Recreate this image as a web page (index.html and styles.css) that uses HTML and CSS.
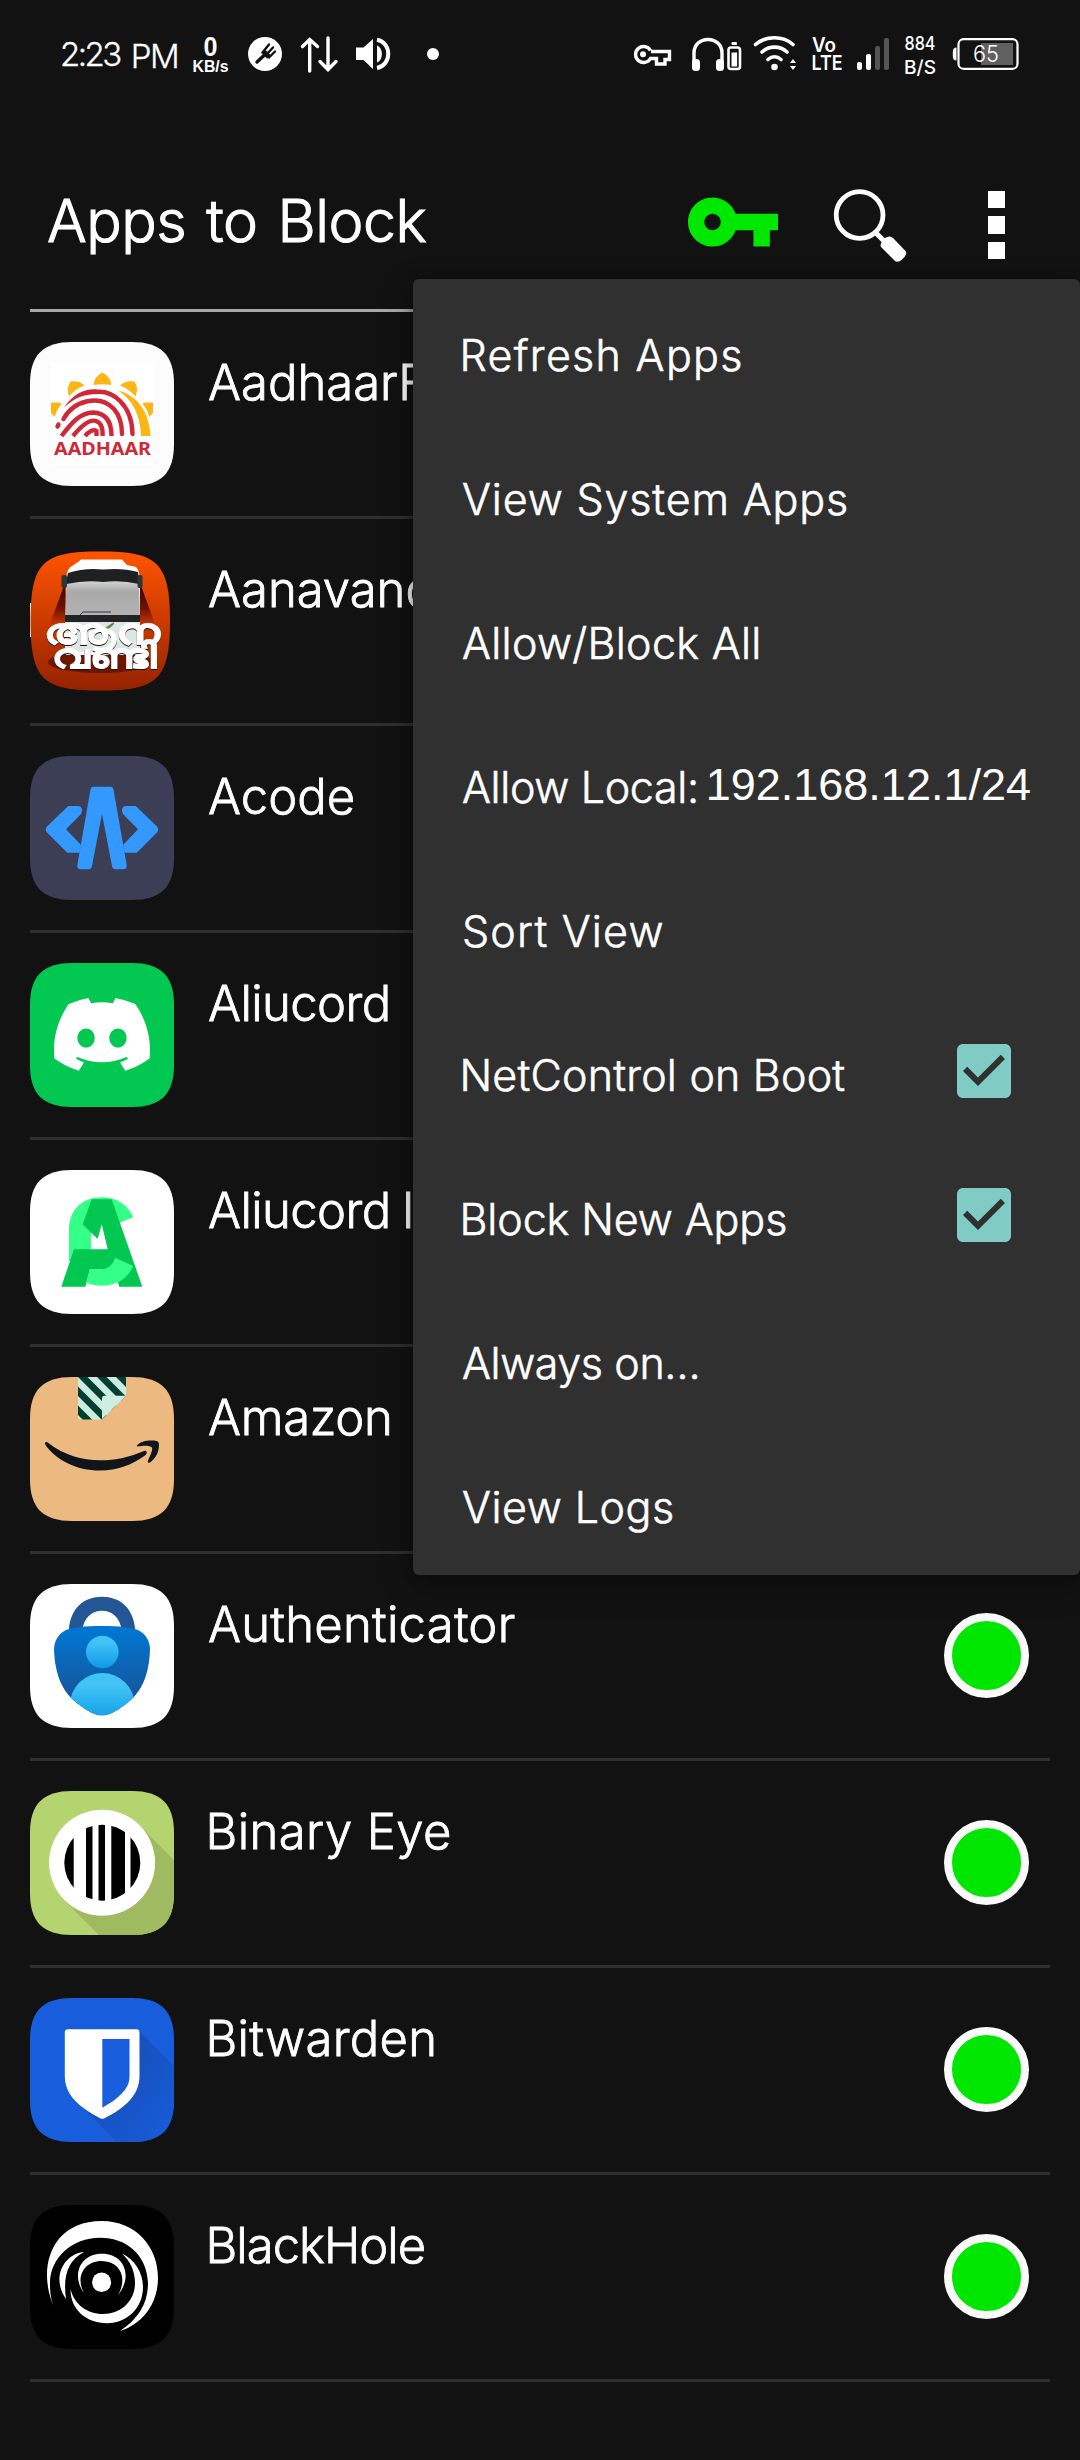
FILE: index.html
```
<!DOCTYPE html>
<html lang="en">
<head>
<meta charset="utf-8">
<title>Apps to Block</title>
<link rel="stylesheet" href="styles.css">
</head>
<body>
<svg class="defs" aria-hidden="true">
  <defs>
    <clipPath id="squircle"><path d="M0 42C0 13 13 0 42 0H102C131 0 144 13 144 42V102C144 131 131 144 102 144H42C13 144 0 131 0 102Z"/></clipPath>
    <linearGradient id="busBg" x1="0" y1="0" x2="0" y2="1"><stop offset="0" stop-color="#ff5400"/><stop offset="1" stop-color="#942200"/></linearGradient>
    <linearGradient id="beam" x1="0" y1="0" x2="0" y2="1"><stop offset="0" stop-color="#2a0500"/><stop offset=".6" stop-color="#6d1200"/><stop offset="1" stop-color="#c43500"/></linearGradient>
    <linearGradient id="glass" x1="0" y1="0" x2="0" y2="1"><stop offset="0" stop-color="#d2d2d2"/><stop offset=".3" stop-color="#a9a9a9"/><stop offset="1" stop-color="#b4b4b4"/></linearGradient>
    <linearGradient id="shield" x1="0" y1="0" x2="0" y2="1"><stop offset="0" stop-color="#0078d4"/><stop offset=".75" stop-color="#1457a0"/></linearGradient>
    <linearGradient id="head" x1="0" y1="0" x2="0" y2="1"><stop offset=".2" stop-color="#41c3f6"/><stop offset="1" stop-color="#0f98e8"/></linearGradient>
    <linearGradient id="torso" x1="0" y1="0" x2="0" y2="1"><stop offset=".2" stop-color="#41c3f6"/><stop offset=".65" stop-color="#16a3e9"/></linearGradient>
    <linearGradient id="bwShade" x1="0" y1="0" x2="1" y2="1"><stop offset=".3" stop-color="#174fb8"/><stop offset="1" stop-color="#175ddc"/></linearGradient>
    <pattern id="tape" width="19" height="19" patternUnits="userSpaceOnUse" patternTransform="translate(48 0)">
      <rect width="19" height="19" fill="#cbecdf"/>
      <path d="M0 0H9.500L19 9.500V19ZM0 9.500V19H9.500Z" fill="#003f32"/>
    </pattern>
    <clipPath id="eye"><circle cx="72.300" cy="71.700" r="38"/></clipPath>
    <clipPath id="guard"><path id="guardShape" d="M72 42C90 42 100 43.500 108 46C116 50 120 57 120 66C119 92 111 109 96 120C85 128 79 131.300 72 131.300C65 131.300 59 128 48 120C33 109 25 92 24 66C24 57 28 50 36 46C44 43.500 54 42 72 42Z"/></clipPath>
  </defs>
</svg>

<header class="status">
  <div class="status-left">
    <span class="clock">2:23<span class="meridiem">PM</span></span>
    <svg class="s-rate" viewBox="192 34 38 40"><text class="rate-num" x="203.500" y="56" textLength="14" lengthAdjust="spacingAndGlyphs">0</text><text class="rate-unit" x="192.500" y="71.500" textLength="36" lengthAdjust="spacingAndGlyphs">KB/s</text></svg>
    <svg class="s-fork" viewBox="248 34 34 40"><ellipse cx="265" cy="54" rx="17" ry="17" fill="#fff"/><g fill="none" stroke="#121212" stroke-width="2.400" stroke-linecap="round"><path d="M257 62L265 54.500" stroke-width="3.400"/><path d="M262.500 52.500L269 44.500M267 54L273 47.500M269 57.500L275 51.500"/><path d="M263.500 51.500L269 57" stroke-width="5" stroke-linecap="butt"/></g></svg>
    <svg class="s-arrows" viewBox="301 34 37 40"><path d="M309.700 71V40M302.500 46.500L309.700 39.500L317.500 46.500M328 38V69M320 61.500L328 69.500L336 61.500" fill="none" stroke="#fff" stroke-width="3.400" stroke-linecap="round"/></svg>
    <svg class="s-sound" viewBox="356 34 34 40"><path d="M356 47.500H363.500L373 39V69L363.500 60H356Z" fill="#fff"/><path d="M377 45.500C383.500 48 383.500 60 377 62.500Z" fill="#fff"/><path d="M377 39.700C392 42.500 392 65 377 68" fill="none" stroke="#fff" stroke-width="4"/></svg>
    <svg class="s-dot" viewBox="427 34 13 40"><circle cx="433" cy="54" r="6" fill="#fff"/></svg>
  </div>
  <div class="status-right">
    <svg class="r-key" viewBox="632 34 40 40"><path d="M650.500 50.500A8 8 0 1 0 650.500 58.500H656.500V64H665V59.500H669.500V51.500H651" fill="none" stroke="#fff" stroke-width="3.400"/><circle cx="643" cy="54.300" r="3" fill="#fff"/></svg>
    <svg class="r-phones" viewBox="691 34 51 40"><path d="M694 66V53C694 35 722 35 722 53V66" fill="none" stroke="#fff" stroke-width="3.400"/><rect x="692" y="59" width="8" height="12" rx="3.500" fill="#fff"/><rect x="716" y="59" width="8" height="12" rx="3.500" fill="#fff"/><rect x="728.500" y="47.500" width="11.500" height="21.500" rx="2.500" fill="none" stroke="#fff" stroke-width="2.600"/><rect x="731.500" y="52.500" width="5.600" height="14" fill="#fff"/><rect x="731.500" y="42" width="5.500" height="3" rx="1" fill="#fff"/></svg>
    <svg class="r-wifi" viewBox="753 34 44 40"><g fill="none" stroke="#fff" stroke-width="3.600" stroke-linecap="round"><path d="M755.500 44.500C766 35.500 783 35.500 793 44.500M762 52C769 45.500 780 45.500 787 52M768 59.500C772 56 777 56 781 59.500"/></g><circle cx="774.500" cy="67" r="3.300" fill="#fff"/><path d="M790 63L793 59L796 63ZM790 66L793 70L796 66Z" fill="#fff"/></svg>
    <svg class="r-volte" viewBox="811 34 32 40"><text class="volte" x="812" y="52" textLength="24" lengthAdjust="spacingAndGlyphs">Vo</text><text class="volte" x="811.500" y="70" textLength="31" lengthAdjust="spacingAndGlyphs">LTE</text></svg>
    <svg class="r-signal" viewBox="856 34 34 40"><rect x="857" y="62" width="5" height="8" rx="2" fill="#fff"/><rect x="866" y="54" width="5" height="16" rx="2" fill="#fff"/><rect x="875" y="46" width="5" height="24" rx="2" fill="#555"/><rect x="884" y="38" width="5" height="32" rx="2" fill="#555"/></svg>
    <svg class="r-speed" viewBox="904 34 33 42"><text class="speed" x="904.500" y="50" textLength="31" lengthAdjust="spacingAndGlyphs">884</text><text class="speed" x="904" y="74" textLength="32" lengthAdjust="spacingAndGlyphs">B/S</text></svg>
    <svg class="r-battery" viewBox="952 34 67 40"><rect x="958.500" y="39.200" width="59" height="29.600" rx="5" fill="none" stroke="#fff" stroke-width="2.200"/><path d="M956.500 47.500V60.500Q952.800 60.500 952.800 56V52Q952.800 47.500 956.500 47.500Z" fill="#fff"/><rect x="981" y="43" width="32" height="22" fill="#606060"/><text class="charge" x="973" y="61.800" textLength="26" lengthAdjust="spacingAndGlyphs">65</text></svg>
  </div>
</header>

<div class="appbar">
  <h1 class="title">Apps to Block</h1>
  <div class="actions">
    <svg class="a-key" viewBox="1 6 22 12"><path fill="#00e800" d="M12.650 10C11.830 7.670 9.610 6 7 6c-3.310 0-6 2.690-6 6s2.690 6 6 6c2.610 0 4.830-1.670 5.650-4H17v4h4v-4h2v-4H12.650zM7 14c-1.100 0-2-.9-2-2s.9-2 2-2 2 .9 2 2-.9 2-2 2z"/></svg>
    <svg class="a-search" viewBox="833 187 75 76"><circle cx="859.600" cy="215" r="23.400" fill="none" stroke="#fff" stroke-width="4.800"/><path d="M876 233L884 241" stroke="#fff" stroke-width="5"/><path d="M883.500 238.500L889 236.500Q891 236 893 238L905.500 251Q908 254 902 259.500Q898 263 895 261L881.500 247.500Q880 246 881 243.500Z" fill="#fff"/></svg>
    <span class="a-more"><i></i><i></i><i></i></span>
  </div>
</div>

<main class="list">
  <div class="row">
    <svg class="icon" viewBox="0 0 144 144"><g clip-path="url(#squircle)"><rect width="144" height="144" fill="#fcfcfc"/><rect x="21" y="21" width="102" height="102" fill="#fff"/></g>
      <g fill="#fbb615"><path d="M72.300 30.500Q81 35 81.300 43Q72 41.500 63.500 43Q64 35 72.300 30.500Z"/><path d="M40.500 39.500Q49 38.500 54.500 43.500Q45 47 39 54.500Q36 46 40.500 39.500Z"/><path d="M21 60.500H29L31.700 61.500Q27 67 24.500 75L21 71Z"/><path d="M104.500 39.500Q96 38.500 90 43.500Q99 47 105.500 54.500Q109 46 104.500 39.500Z"/><path d="M123 60.500H115L112.500 61.500Q117 67 119.500 75L123 71Z"/><path d="M88 48.500C107 53 119.500 70 120.500 94H111C110.500 74 103 58 88 48.500Z"/></g>
      <g fill="none" stroke="#cf2836" stroke-width="4.400" stroke-linecap="round"><path d="M66 50C82 48 102 62 102.500 92"/><path d="M33.500 77C44 58 70 52 84 67C90 74 92 82 92 92"/><path d="M27.500 84.500L28.500 82.500"/></g>
      <path d="M34 65.500C44 51 56 46.500 67 47.500V52C56 52 45 55 34 65.500Z" fill="#cf2836"/>
      <g fill="none" stroke="#cf2836" stroke-width="4.400"><path d="M31.500 94C42 80 50 71 63 70.500C76 71 81.500 80 81.500 94"/><path d="M43 94C52 83 60 77 66 79C72 81 73 87 72.500 94"/><path d="M55 94Q62 86 66.500 89V94"/></g>
      <text class="aadhaar" x="24" y="113" textLength="97" lengthAdjust="spacingAndGlyphs">AADHAAR</text></svg>
    <span class="name n-aadhaar">AadhaarF</span><span class="toggle"></span>
  </div>
  <div class="row">
    <svg class="icon" viewBox="0 0 144 144"><rect x="0" y="54" width="2" height="34" fill="#fff"/><path d="M.5 72C.5 12 14 2.500 70 2.500S140 12 140 72S126 141.500 70 141.500S.5 132 .5 72Z" fill="url(#busBg)"/>
      <path d="M35 34L20 75H36ZM110 34L125 75H109Z" fill="url(#beam)"/><ellipse cx="70" cy="113" rx="52" ry="11" fill="#5a0f00" opacity=".75"/>
      <path d="M48 13L51 10.500H92L97 16L106 18Q110 21 110 35V106H36V30Q37 19 42 17Z" fill="#fdfdfd"/><path d="M38 24Q55 18.500 73 20.500Q92 18.500 108 23L110 37H35Z" fill="#1f2021"/><path d="M36.500 35Q55 31 73 33Q92 31 109 35L110 67H35Z" fill="url(#glass)"/><path d="M35 66H110V74H35Z" fill="#222426"/><path d="M50 66L53 63H81" fill="none" stroke="#333" stroke-width="1"/><path d="M35 73H110V103H35Z" fill="#dce6e3"/><path d="M62 76L68 79M76 79L84 74" stroke="#e46145" stroke-width="1.500"/><path d="M77 80L83 75" stroke="#2d9b4b" stroke-width="1.800"/>
      <rect x="31.500" y="26" width="5.500" height="13" rx="2" fill="#303335"/><rect x="107.500" y="26" width="5" height="13" rx="2" fill="#303335"/>
      <text class="malayalam m1" x="14" y="95" textLength="115" lengthAdjust="spacingAndGlyphs">ആന</text><text class="malayalam m2" x="22" y="119" textLength="104" lengthAdjust="spacingAndGlyphs">വണ്ടി</text></svg>
    <span class="name n-aana">Aanavand</span><span class="toggle"></span>
  </div>
  <div class="row">
    <svg class="icon" viewBox="0 0 144 144"><g clip-path="url(#squircle)"><rect width="144" height="144" fill="#3b3e54"/></g><path d="M63.500 30.700H80.500Q83 30.700 83.500 33.500L96.700 109Q97 113.300 93.500 113.300H85.500Q82.500 113.300 82 110L72 58L62 110Q61.500 113.300 58.500 113.300H50.500Q47 113.300 47.300 109L60.500 33.500Q61 30.700 63.500 30.700Z" fill="#3399ff"/><g fill="#3399ff"><path d="M38.300 50H48C52 50 53 54 51 58L36 73.300L51 89L49.500 96.700H37.300L17 76.500Q14.500 73.300 17 70.500Z"/><path d="M105.700 50H96C92 50 91 54 93 58L108 73.300L93 89L94.500 96.700H106.700L127 76.500Q129.500 73.300 127 70.500Z"/></g></svg>
    <span class="name n-acode">Acode</span><span class="toggle"></span>
  </div>
  <div class="row">
    <svg class="icon" viewBox="0 0 144 144"><g clip-path="url(#squircle)"><rect width="144" height="144" fill="#02c852"/></g><g transform="translate(24 35) scale(.755)"><path fill="#fff" d="M107.700,8.070A105.150,105.150,0,0,0,81.470,0a72.060,72.060,0,0,0-3.360,6.830A97.680,97.680,0,0,0,49,6.830,72.370,72.370,0,0,0,45.640,0,105.890,105.890,0,0,0,19.390,8.090C2.790,32.650-1.710,56.600.54,80.210h0A105.730,105.730,0,0,0,32.710,96.360,77.700,77.700,0,0,0,39.600,85.250a68.420,68.420,0,0,1-10.850-5.180c.91-.66,1.800-1.340,2.660-2a75.570,75.570,0,0,0,64.320,0c.87.710,1.760,1.390,2.660,2a68.680,68.680,0,0,1-10.870,5.190,77,77,0,0,0,6.890,11.100A105.250,105.250,0,0,0,126.600,80.220h0C129.240,52.840,122.090,29.110,107.700,8.070ZM42.450,65.690C36.180,65.690,31,60,31,53s5-12.740,11.430-12.740S54,46,53.890,53,48.840,65.690,42.450,65.690Zm42.240,0C78.410,65.690,73.250,60,73.250,53s5-12.740,11.440-12.740S96.230,46,96.120,53,91.080,65.690,84.690,65.690Z"/></g></svg>
    <span class="name n-aliucord">Aliucord</span><span class="toggle"></span>
  </div>
  <div class="row">
    <svg class="icon" viewBox="0 0 144 144"><g clip-path="url(#squircle)"><rect width="144" height="144" fill="#fff"/></g><path d="M39 60C39 40 52 27.300 72 27.300C87 27.300 98 35 103.300 47.300L88 53.300L61 53V91H39Z" fill="#34ff87"/><path d="M61.700 29.300H81.700L112.300 116.700H89.300L77.700 79.300L71.700 54.300L67.700 69L52.700 54.300Z" fill="#02c852"/><path d="M44 79.300H80L90 99L60 99.300L55.300 116.700H31.300Z" fill="#02c852"/><path d="M85 87.700L103.300 96C98 108 87 115.700 72 115.700C66 115.700 60 114.500 56 112.500L60 99.300H71C78 99 83 95 85 87.700Z" fill="#34ff87"/></svg>
    <span class="name n-aliucord">Aliucord I</span><span class="toggle"></span>
  </div>
  <div class="row">
    <svg class="icon" viewBox="0 0 144 144"><g clip-path="url(#squircle)"><rect width="144" height="144" fill="#ecb981"/></g><path d="M48 0H96V18.700L72 42.500H50Q48 42.500 48 40.500Z" fill="url(#tape)"/><path d="M72 42V21Q72 18.700 74.500 18.700H96Z" fill="#cdeee0"/><path d="M15 66.500C15 64.500 17 64.500 19 66.500C34 78 52 83.300 70 83.300C86 83.300 100 80 114 74C117 73 118 76 115 78.500C102 88 87 93.500 70 93.500C46 93.500 27 83 16 69Z" fill="#0f151b"/><path d="M107 68.500C110 64 118 63 124 63.500C128 64 129 65 129 68C129 75 126 81 120 85.500C118 86.500 117.500 85 118 83.500C120 79 123 73 122 70.500C120 68 113 68.500 109 69.300C107 69.600 106.500 69.300 107 68.500Z" fill="#0f151b"/></svg>
    <span class="name n-amazon">Amazon</span><span class="toggle"></span>
  </div>
  <div class="row">
    <svg class="icon" viewBox="0 0 144 144"><g clip-path="url(#squircle)"><rect width="144" height="144" fill="#fff"/></g><path d="M38.800 47C40 24 54 12.700 72 12.700S104 24 105.300 47H92C90 33 82 26.700 72 26.700S54 33 52 47Z" fill="#225695"/><use href="#guardShape" fill="url(#shield)"/><circle cx="72.300" cy="68" r="16.300" fill="url(#head)"/><g clip-path="url(#guard)"><circle cx="72.300" cy="121.500" r="32.500" fill="url(#torso)"/></g></svg>
    <span class="name n-auth">Authenticator</span><span class="toggle"></span>
  </div>
  <div class="row">
    <svg class="icon" viewBox="0 0 144 144"><g clip-path="url(#squircle)"><rect width="144" height="144" fill="#b4d46f"/><path d="M110 35L144 69V144H69L34 109Z" fill="#9fba61"/></g><circle cx="72.100" cy="71.800" r="53" fill="#fff"/><g clip-path="url(#eye)"><path d="M34 30H43.700V114H34ZM56 30H62.500V114H56ZM68.500 30H75V114H68.500ZM81.300 30H95V114H81.300ZM100.500 30H111V114H100.500Z" fill="#000"/></g></svg>
    <span class="name n-b n-binary">Binary Eye</span><span class="toggle"></span>
  </div>
  <div class="row">
    <svg class="icon" viewBox="0 0 144 144"><g clip-path="url(#squircle)"><rect width="144" height="144" fill="#175ddc"/><path d="M108 32L144 68V144H87L58 115Z" fill="url(#bwShade)"/></g><path d="M38 31.300H106.500Q109.500 31.300 109.500 34.500V78C109.500 97 95 110 74.500 120.200Q72.300 121.300 70 120.200C49 109 34.800 97 34.800 78V34.500Q34.800 31.300 38 31.300Z" fill="#fff"/><path d="M72.300 41V109.700C88 101 99.500 91 99.500 79V41Z" fill="#175ddc"/></svg>
    <span class="name n-b n-bit">Bitwarden</span><span class="toggle"></span>
  </div>
  <div class="row">
    <svg class="icon" viewBox="0 0 144 144"><g clip-path="url(#squircle)"><rect width="144" height="144"/></g><g fill="#fff"><path d="M25 104C7 68 18 16 72 16C105 16 128 41 128 73C128 98 113 119 90 126C108 114 118 99 118 78C117 50 97 32.700 70 32.700C42 32.700 20 53 20 78C20 88 21 96 25 104Z"/><path d="M54 47C36 48 20 71 36 94C33 72 37 56 54 47Z"/><path d="M54.700 89C41 72 49 48.700 72 48.700C95 48.700 103 72 88 90C98 73 90 56 71.500 56C53 56 45 74 54.700 89Z"/><ellipse cx="71.600" cy="77.300" rx="9.500" ry="9.800"/><path d="M92 48.500C104 54 113 67 113 82C113 103 97 118.300 77 118.300C56 118.300 40 104 40.600 84C44 99 57 109 73 109C91 109 105 96 105 78C105 66 100 56 92 48.500Z"/></g></svg>
    <span class="name n-b n-hole">BlackHole</span><span class="toggle"></span>
  </div>
</main>

<nav class="menu">
  <div class="item stem w-refresh">Refresh Apps</div>
  <div class="item w-system">View System Apps</div>
  <div class="item w-all">Allow/Block All</div>
  <div class="item w-local">Allow Local:<span class="ip">192.168.12.1/24</span></div>
  <div class="item w-sort">Sort View</div>
  <div class="item stem w-boot">NetControl on Boot<svg class="check" viewBox="3 3 18 18"><path d="M19 3H5c-1.110 0-2 .9-2 2v14c0 1.100.89 2 2 2h14c1.110 0 2-.9 2-2V5c0-1.100-.89-2-2-2zm-9 14l-5-5 1.410-1.410L10 14.170l7.590-7.590L19 8l-9 9z" fill="#80cbc4"/></svg></div>
  <div class="item stem w-new">Block New Apps<svg class="check" viewBox="3 3 18 18"><path d="M19 3H5c-1.110 0-2 .9-2 2v14c0 1.100.89 2 2 2h14c1.110 0 2-.9 2-2V5c0-1.100-.89-2-2-2zm-9 14l-5-5 1.410-1.410L10 14.170l7.590-7.590L19 8l-9 9z" fill="#80cbc4"/></svg></div>
  <div class="item w-always">Always on…</div>
  <div class="item w-logs">View Logs</div>
</nav>
</body>
</html>
```
FILE: styles.css
```
* { box-sizing: border-box; }
body {
  margin: 0;
  width: 1080px;
  height: 2460px;
  position: relative;
  overflow: hidden;
  background: #121212;
  color: #fff;
  font-family: Inter, "Liberation Sans", sans-serif;
  font-weight: 350;
}
svg { display: block; flex: none; overflow: visible; }
.defs { position: absolute; width: 0; height: 0; }

/* status bar */
.status { height: 108px; display: flex; justify-content: space-between; padding: 0 61px 0 60px; align-items: center; }
.status-left, .status-right { display: flex; height: 40px; }
.status svg { height: 40px; }
.status .r-speed { height: 42px; }
.clock { width: 132px; font-size: 33px; line-height: 40px; letter-spacing: -2.500px; white-space: nowrap; -webkit-text-stroke: .3px #fff; }
.meridiem { display: inline-block; margin-left: 11px; vertical-align: -2px; letter-spacing: -1.500px; }
.s-rate { width: 38px; }
.s-fork { width: 34px; margin-left: 18px; }
.s-arrows { width: 37px; margin-left: 19px; }
.s-sound { width: 34px; margin-left: 18px; }
.s-dot { width: 13px; margin-left: 37px; }
.r-key { width: 40px; }
.r-phones { width: 51px; margin-left: 19px; }
.r-wifi { width: 44px; margin-left: 11px; }
.r-volte { width: 32px; margin-left: 14px; }
.r-signal { width: 34px; margin-left: 13px; }
.r-speed { width: 33px; margin-left: 14px; }
.r-battery { width: 67px; margin-left: 15px; }
.status text { fill: #fff; font-family: Inter, sans-serif; }
.status .rate-num { font: 700 28px "Liberation Sans", sans-serif; }
.status .rate-unit { font: 700 16px "Liberation Sans", sans-serif; }
.status .volte { font-size: 19.500px; font-weight: 600; }
.status .speed { font-size: 19px; font-weight: 450; }
.status .charge { font-size: 23px; font-weight: 350; }

/* title bar */
.appbar { height: 204px; margin-left: 30px; margin-right: 30px; padding-top: 24px; border-bottom: 3px solid #a9a7a9; display: flex; align-items: center; justify-content: space-between; }
.title { margin: 0 0 0 17px; font-size: 59px; font-weight: 350; line-height: 72px; letter-spacing: -.5px; word-spacing: 4px; -webkit-text-stroke: 1.100px #fff; }
.actions { display: flex; align-items: center; margin-right: 45px; }
.a-key { width: 90px; height: 50px; margin-top: 2px; }
.a-search { width: 75px; height: 76px; margin-left: 55px; margin-top: 9px; }
.a-more { display: flex; flex-direction: column; gap: 8px; margin: 9px 0 0 80px; }
.a-more i { display: block; width: 17px; height: 17.500px; background: #fff; }

/* application list */
.list { padding: 0 30px; }
.row { height: 207px; border-bottom: 3px solid #2f2f2f; display: flex; }
.icon { width: 144px; height: 144px; margin-top: 30px; }
.name { flex: 1; margin: 41px 0 0 34px; font-size: 49px; line-height: 60px; white-space: nowrap; -webkit-text-stroke: .8px #fff; }
.n-b { text-indent: -2.500px; }
.n-aliucord { letter-spacing: -.6px; word-spacing: -2px; }
.n-amazon { letter-spacing: -.3px; }
.n-auth { letter-spacing: .25px; }
.n-binary { letter-spacing: .4px; }
.n-bit { letter-spacing: .3px; }
.n-hole { letter-spacing: -1px; }
.toggle { width: 85px; height: 85px; margin: 59px 21px 0 0; border: 8.500px solid #fafafa; border-radius: 50%; background: #00e600; }
.aadhaar { fill: #cf2836; font: 700 18.500px "Noto Sans", sans-serif; }
.malayalam { fill: #fff; stroke: #fff; stroke-width: 1; font: 700 36px "Noto Sans", sans-serif; filter: drop-shadow(0 1.500px 0 #1a1010); }
.malayalam.m2 { font-size: 34px; }

/* overflow menu */
.menu { position: absolute; left: 413px; top: 279px; width: 667px; height: 1296px; background: #303030; border-radius: 6px; box-shadow: 0 10px 30px rgba(0, 0, 0, .35), 0 0 12px rgba(0, 0, 0, .3); }
.item { display: flex; align-items: center; height: 144px; padding: 7px 0 0 49px; line-height: 60px; font-size: 43px; white-space: nowrap; -webkit-text-stroke: .6px #fff; }
.stem { padding-left: 46.500px; }
.w-refresh { letter-spacing: 1.300px; }
.w-system { letter-spacing: .85px; }
.w-all { letter-spacing: .3px; }
.w-local { letter-spacing: -.35px; }
.w-sort { letter-spacing: 1.200px; }
.w-boot { letter-spacing: .2px; }
.w-new { letter-spacing: -.1px; }
.w-always { letter-spacing: -.4px; }
.w-logs { letter-spacing: .5px; }
.ip { margin: 0 0 3px 7px; font-family: "Liberation Sans", Arial, sans-serif; font-size: 45px; letter-spacing: 0; -webkit-text-stroke: 0; }
.check { width: 54px; height: 54px; margin: -7px 69px 0 auto; }
```
